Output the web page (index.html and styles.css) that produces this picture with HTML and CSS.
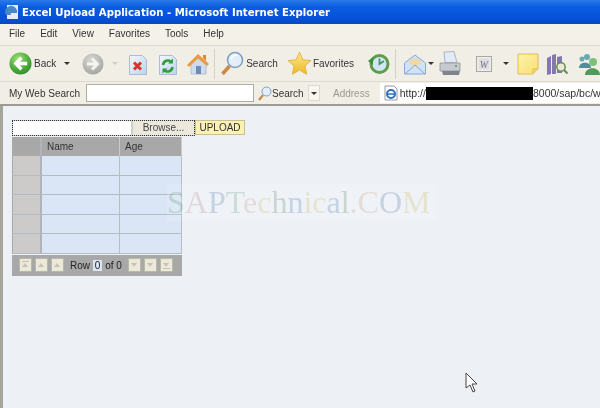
FILE: index.html
```html
<!DOCTYPE html>
<html lang="en">
<head>
    <meta charset="UTF-8">
    <title>Excel Upload Application</title>
    <link rel="stylesheet" href="styles.css">
</head>
<body>
    <svg class="defs" width="0" height="0">
        <defs>
            <radialGradient id="greenBall" cx="40%" cy="30%" r="75%"><stop offset="0" stop-color="#a6e07e"/><stop offset="0.6" stop-color="#4fae3c"/><stop offset="1" stop-color="#2f8a2c"/></radialGradient>
            <radialGradient id="grayBall" cx="40%" cy="30%" r="75%"><stop offset="0" stop-color="#d6d6d2"/><stop offset="1" stop-color="#a4a4a0"/></radialGradient>
            <linearGradient id="pageFill" x1="0" y1="0" x2="1" y2="1"><stop offset="0" stop-color="#f4f8fd"/><stop offset="1" stop-color="#bcd2ec"/></linearGradient>
            <linearGradient id="noteFill" x1="0" y1="0" x2="1" y2="1"><stop offset="0" stop-color="#fdf3ac"/><stop offset="1" stop-color="#f8df72"/></linearGradient>
            <linearGradient id="starFill" x1="0" y1="0" x2="0" y2="1"><stop offset="0" stop-color="#fbe98a"/><stop offset="1" stop-color="#eeb82c"/></linearGradient>
        </defs>
    </svg>

    <div class="window">
        <div class="titlebar">
            <svg class="title-icon" width="16" height="16" viewBox="0 0 16 16"><rect x="3" y="1" width="11" height="14" fill="#e4ecf5"/><path d="M2 11 A6 6 0 1 1 13 9 H7 A2 2 0 0 0 7 11 Z" fill="#4a86c8"/></svg>
            <span>Excel Upload Application - Microsoft Internet Explorer</span>
        </div>

        <div class="menubar">
            <span>File</span>
            <span>Edit</span>
            <span>View</span>
            <span>Favorites</span>
            <span>Tools</span>
            <span>Help</span>
        </div>

        <div class="toolbar">
            <svg width="23" height="23" viewBox="0 0 24 24"><circle cx="12" cy="12" r="11.500" fill="url(#greenBall)"/><path d="M19 12H8M13 6l-6 6 6 6" fill="none" stroke="#fff" stroke-width="3.400"/></svg>
            <span class="tool-label">Back</span>
            <span class="arrow arrow-back"></span>
            <svg class="icon-forward" width="22" height="22" viewBox="0 0 22 22"><circle cx="11" cy="11" r="10.500" fill="url(#grayBall)"/><path d="M5 11h10M10 5.500l5.500 5.500-5.500 5.500" fill="none" stroke="#f4f4f0" stroke-width="3"/></svg>
            <span class="arrow arrow-faded"></span>
            <svg class="icon-stop" width="20" height="24" viewBox="0 0 20 24"><path d="M1.500 3.500h13l4 4v15h-17z" fill="url(#pageFill)" stroke="#a9bdd6"/><path d="M6 10.500l7 7M13 10.500l-7 7" stroke="#d6352c" stroke-width="3"/></svg>
            <svg class="icon-refresh" width="20" height="24" viewBox="0 0 20 24"><path d="M1.500 3.500h13l4 4v15h-17z" fill="url(#pageFill)" stroke="#a9bdd6"/><path d="M5 13a5 5 0 0 1 8.500-3M14.500 15a5 5 0 0 1-8.500 3" fill="none" stroke="#2f9e3c" stroke-width="2.600"/><path d="M15 6.500v5h-5zM4.500 21.500v-5h5z" fill="#2f9e3c"/></svg>
            <svg class="icon-home" width="24" height="24" viewBox="0 0 24 24"><path d="M5 11v11h15V11l-7-6z" fill="#cfdcee" stroke="#a3b8d4" stroke-width="0.800"/><path d="M1 13L12 2l11 10-2 2-9-7.500L3 15z" fill="#ea9a40"/><path d="M17 3h3v6l-3-3z" fill="#d98a3c"/><rect x="10" y="14" width="5" height="8" fill="#6d8db8"/></svg>
            <span class="sep"></span>
            <svg class="icon-search" width="24" height="26" viewBox="0 0 24 26"><circle cx="15" cy="9" r="7.500" fill="#e2effa" stroke="#7f9fc4" stroke-width="1.600"/><path d="M11 8c1-3 3-4 6-4" fill="none" stroke="#fff" stroke-width="1.500"/><path d="M9.500 15L2.500 23" stroke="#c98a4a" stroke-width="3.600"/></svg>
            <span class="tool-label">Search</span>
            <svg class="icon-star" width="25" height="25" viewBox="0 0 24 24"><path d="M12 1l3.300 7.400 7.700.8-5.800 5.200 1.700 8L12 18.300 5.100 22.400l1.700-8L1 9.200l7.700-.8z" fill="url(#starFill)" stroke="#dcae34" stroke-width="0.800"/></svg>
            <span class="tool-label label-favorites">Favorites</span>
            <svg class="icon-history" width="24" height="24" viewBox="0 0 24 24"><circle cx="12.500" cy="12" r="8.500" fill="#d3e6f4" stroke="#5c9c4c" stroke-width="3"/><path d="M1 9l5-4v8z" fill="#3f8f3a"/><path d="M12.500 6.500V12l4.500-3" fill="none" stroke="#4f8f6a" stroke-width="1.800"/></svg>
            <span class="sep"></span>
            <svg class="icon-mail" width="24" height="24" viewBox="0 0 24 24"><path d="M1.500 11L12 3l10.500 8v11h-21z" fill="#cfe2f6" stroke="#87a8d0"/><path d="M6 11c1-6 11-6 12 0l-6 4z" fill="#f0d8a0"/><path d="M2 22l10-9 10 9" fill="none" stroke="#87a8d0"/></svg>
            <span class="arrow arrow-mail"></span>
            <svg class="icon-print" width="24" height="26" viewBox="0 0 24 26"><path d="M6 1l10-.5 3 11H7z" fill="#e2eaf5" stroke="#94a8c2" stroke-width="0.800"/><path d="M2 12h20v8H2z" fill="#c6cad0" stroke="#8f949c" stroke-width="0.800"/><path d="M4 20h18l-1 4H5z" fill="#7f848c"/><circle cx="18" cy="15" r="1" fill="#5c8f4a"/></svg>
            <svg class="icon-word" width="16" height="16" viewBox="0 0 16 16"><rect x="0.500" y="0.500" width="15" height="15" fill="#f1efe9" stroke="#a9a9a4"/><rect x="2.500" y="2.500" width="11" height="11" fill="#dcdee4"/><text x="8" y="12" text-anchor="middle" class="word-letter">W</text></svg>
            <span class="arrow arrow-word"></span>
            <svg class="icon-note" width="22" height="22" viewBox="0 0 22 22"><path d="M1 1h20v15l-5 5H1z" fill="url(#noteFill)" stroke="#e2bc54"/><path d="M16 21v-5h5" fill="#f4d776" stroke="#e2bc54"/></svg>
            <svg class="icon-book" width="22" height="24" viewBox="0 0 22 24"><path d="M1 6l4-2v18l-4 1zM6 3l4-1v20H6zM11 5l5-1v17h-5z" fill="#8478ae"/><circle cx="15" cy="15" r="4.200" fill="#ece8d4" stroke="#5f8f58" stroke-width="1.500"/><path d="M18 18l3.500 3.500" stroke="#5f8f58" stroke-width="2"/></svg>
            <svg class="icon-people" width="23" height="22" viewBox="0 0 23 22"><circle cx="5" cy="6" r="2.500" fill="#6aa8b4"/><circle cx="10" cy="4" r="3" fill="#6aa8b4"/><path d="M2 15c0-7 12-7 12 0z" fill="#4d8f9c"/><circle cx="16" cy="9" r="4" fill="#7cc07a"/><path d="M8 22c0-9 15-9 15 0z" fill="#4d9c5c"/></svg>
        </div>

        <div class="addressbar">
            <span class="search-label">My Web Search</span>
            <span class="search-field"></span>
            <span class="search-btn">
                <svg width="15" height="15" viewBox="0 0 15 15"><circle cx="9.500" cy="5.500" r="4.500" fill="#e2effa" stroke="#7f9fc4"/><path d="M6 9l-4 5" stroke="#c98a4a" stroke-width="2.200"/></svg>
                Search
            </span>
            <span class="search-drop"><span class="arrow"></span></span>
            <span class="address-label">Address</span>
            <div class="address-field">
                <svg width="16" height="16" viewBox="0 0 16 16"><path d="M2 1h9l3 3v11H2z" fill="#fff" stroke="#9a9a9a"/><circle cx="8" cy="9" r="4" fill="none" stroke="#2f6fc0" stroke-width="2"/><path d="M4 9h8" stroke="#2f6fc0" stroke-width="1.500"/></svg>
                <span class="url-start">http://</span>
                <span class="redacted"></span>
                <span>8000/sap/bc/w</span>
            </div>
        </div>

        <div class="content">
            <div class="upload-row">
                <div class="file-group">
                    <span class="file-input"></span>
                    <span class="browse-btn">Browse...</span>
                </div>
                <span class="upload-btn">UPLOAD</span>
            </div>

            <table class="grid">
                <tr class="grid-head">
                    <th class="sel"></th>
                    <th class="col-name">Name</th>
                    <th class="col-age">Age</th>
                </tr>
                <tr><td class="sel"></td><td></td><td></td></tr>
                <tr><td class="sel"></td><td></td><td></td></tr>
                <tr><td class="sel"></td><td></td><td></td></tr>
                <tr><td class="sel"></td><td></td><td></td></tr>
                <tr><td class="sel"></td><td></td><td></td></tr>
                <tr>
                    <td class="pager" colspan="3">
                        <div class="pager-inner">
                            <span class="page-btn first"></span>
                            <span class="page-btn page-up"></span>
                            <span class="page-btn row-up"></span>
                            <span class="page-text">Row <b>0</b> of 0</span>
                            <span class="page-btn row-down"></span>
                            <span class="page-btn page-down"></span>
                            <span class="page-btn last"></span>
                        </div>
                    </td>
                </tr>
            </table>
        </div>
    </div>

    <div class="watermark"><i class="c1">S</i><i class="c2">A</i><i class="c3">P</i><i class="c4">T</i><i class="c5">e</i><i class="c7">c</i><i class="c6">h</i><i class="c3">n</i><i class="c7">i</i><i class="c7">c</i><i class="c3">a</i><i class="c6">l</i><i class="c5">.</i><i class="c5">C</i><i class="c3">O</i><i class="c7">M</i></div>

    <svg class="cursor" width="14" height="22" viewBox="0 0 14 22"><path d="M1 1v15l4-3 3 7 2-1-3-7h5z" fill="#fff" stroke="#444"/></svg>
</body>
</html>
```

FILE: styles.css
```css
* {
    margin: 0;
    padding: 0;
    box-sizing: border-box;
}

html, body {
    width: 600px;
    height: 408px;
    overflow: hidden;
}

body {
    font-family: "Liberation Sans", Arial, sans-serif;
    font-size: 10px;
    color: #333;
    position: relative;
}

.defs {
    position: absolute;
}

.window {
    display: flex;
    flex-direction: column;
    height: 408px;
    background: #f1efe5;
    filter: blur(0.3px);
}

.window svg {
    flex-shrink: 0;
}

.titlebar {
    height: 24px;
    flex-shrink: 0;
    display: flex;
    align-items: center;
    gap: 2px;
    padding-left: 4px;
    background: linear-gradient(180deg, #2a7be8 0%, #0a5ce0 30%, #0550d8 80%, #0a48b8 100%);
    color: #fff;
    font-family: "DejaVu Sans", sans-serif;
    font-size: 10.150px;
    font-weight: bold;
}

.menubar {
    height: 22px;
    flex-shrink: 0;
    display: flex;
    align-items: center;
    padding: 0 0 2px 9px;
    gap: 15px;
    background: #f3f1e8;
    border-bottom: 1px solid #dcdacd;
}

.toolbar {
    height: 36px;
    flex-shrink: 0;
    display: flex;
    align-items: center;
    padding-left: 9px;
    background: #f1efe5;
    border-bottom: 1px solid #dcdacd;
}

.tool-label {
    margin-left: 2px;
    white-space: nowrap;
}

.label-favorites { margin-left: 1px; }

.arrow {
    display: inline-block;
    width: 0;
    height: 0;
    border-left: 3px solid transparent;
    border-right: 3px solid transparent;
    border-top: 3px solid #333;
}

.arrow-back { margin-left: 8px; }
.arrow-faded { margin-left: 8px; border-top-color: #d0d0c8; }
.arrow-mail { margin-left: 1px; }
.arrow-word { margin-left: 11px; }

.icon-forward { margin-left: 12px; }
.icon-stop { margin-left: 10px; }
.icon-refresh { margin-left: 10px; }
.icon-home { margin-left: 8px; }
.icon-search { margin-left: 5px; }
.icon-star { margin-left: 9px; }
.icon-history { margin-left: 13px; }
.icon-mail { margin-left: 7px; }
.icon-print { margin-left: 4px; }
.icon-word { margin-left: 14px; }
.icon-note { margin-left: 8px; }
.icon-book { margin-left: 7px; }
.icon-people { margin-left: 9px; }

.word-letter {
    font-family: "Liberation Serif", serif;
    font-size: 10px;
    font-style: italic;
    fill: #777;
}

.sep {
    width: 1px;
    height: 30px;
    margin-left: 4px;
    background: #d4d2c4;
}

.addressbar {
    height: 24px;
    flex-shrink: 0;
    display: flex;
    align-items: center;
    padding-left: 9px;
    background: #f1efe5;
    border-bottom: 2px solid #9c9b92;
}

.search-label {
    width: 77px;
    flex-shrink: 0;
    white-space: nowrap;
}

.search-field {
    width: 168px;
    height: 18px;
    background: #fff;
    border: 1px solid #b0aea2;
}

.search-btn {
    display: flex;
    align-items: center;
    width: 48px;
    margin-left: 3px;
    white-space: nowrap;
}

.search-drop {
    width: 12px;
    height: 16px;
    margin-left: 3px;
    display: flex;
    align-items: center;
    justify-content: center;
    background: #f7f6ef;
    border: 1px solid #dcdacd;
}

.address-label {
    margin-left: 13px;
    color: #9a9a92;
}

.address-field {
    margin-left: 10px;
    flex: 1;
    height: 20px;
    display: flex;
    align-items: center;
    padding-left: 3px;
    background: #fff;
    overflow: hidden;
    white-space: nowrap;
    font-size: 10.500px;
}

.url-start {
    margin-left: 1px;
}

.redacted {
    width: 107px;
    height: 13px;
    flex-shrink: 0;
    background: #000;
}

.content {
    flex: 1;
    padding: 14px 0 0 9px;
    background: #edf1f5;
    border-left: 3px solid #a6a59c;
}

.upload-row {
    display: flex;
    align-items: flex-start;
    height: 17px;
}

.file-group {
    display: flex;
    width: 183px;
    height: 16px;
    border: 1px dotted #333;
    background: #cfd0cc;
}

.file-input {
    width: 118px;
    background: #fff;
}

.browse-btn {
    flex: 1;
    margin-left: 2px;
    background: #ece9dc;
    text-align: center;
    line-height: 14px;
    color: #444;
}

.upload-btn {
    width: 50px;
    height: 15px;
    background: #faf2b4;
    border: 1px solid #c8c090;
    text-align: center;
    line-height: 13px;
    color: #333;
}

.grid {
    width: 170px;
    border-collapse: separate;
    border-spacing: 0;
    background: #b4bac4;
}

.grid th {
    height: 19px;
    padding-left: 5px;
    background: #a8a8a8;
    font-weight: normal;
    text-align: left;
    border-right: 1px solid #c8ccd0;
}

.grid td {
    height: 19.600px;
    background: #dae5f5;
    border-right: 1px solid #b8bec8;
    border-bottom: 1px solid #b4bac4;
}

.grid .sel {
    width: 30px;
    background: #cccbc9;
    border-left: 1px solid #a8a8a8;
    border-right: 2px solid #b0b4ba;
}

.grid th.sel {
    background: #a8a8a8;
}

.col-name {
    width: 78px;
}

.grid .pager {
    height: 22px;
    background: #a8a8a8;
    border: none;
    border-top: 1px solid #edf1f5;
}

.pager-inner {
    display: flex;
    align-items: center;
    padding-left: 7px;
    gap: 3px;
}

.page-btn {
    width: 13px;
    height: 14px;
    background: #ece9d8;
    border: 1px solid #b8b8ac;
    position: relative;
}

/* small arrow inside pager buttons */
.page-btn::after {
    content: '';
    position: absolute;
    left: 2px;
    top: 4px;
    width: 0;
    height: 0;
    border-left: 3.500px solid transparent;
    border-right: 3.500px solid transparent;
}

.first::after, .page-up::after, .row-up::after {
    border-bottom: 4px solid #c4c3b8;
}

.last::after, .page-down::after, .row-down::after {
    border-top: 4px solid #c4c3b8;
}

.first::before, .last::before {
    content: '';
    position: absolute;
    left: 2px;
    top: 2px;
    width: 7px;
    height: 1px;
    background: #c4c3b8;
}

.last::before {
    top: 9px;
}

.page-text {
    margin: 0 3px;
    color: #222;
    font-size: 10px;
    white-space: nowrap;
}

.page-text b {
    display: inline-block;
    padding: 0 2px;
    background: #dae5f5;
    font-weight: normal;
}

/* overlay on top of the page */
.watermark {
    position: absolute;
    left: 167px;
    top: 184px;
    padding-right: 5px;
    font-family: "Liberation Serif", serif;
    font-size: 32px;
    white-space: nowrap;
    background: rgba(255, 255, 255, 0.12);
    filter: blur(0.3px);
}

.watermark i {
    font-style: normal;
}

.c1 { color: rgba(110, 170, 130, 0.32); }
.c2 { color: rgba(200, 150, 150, 0.3); }
.c3 { color: rgba(110, 140, 190, 0.32); }
.c4 { color: rgba(130, 170, 150, 0.3); }
.c5 { color: rgba(210, 170, 150, 0.32); }
.c6 { color: rgba(120, 150, 130, 0.32); }
.c7 { color: rgba(210, 200, 140, 0.36); }

.cursor {
    position: absolute;
    left: 465px;
    top: 372px;
}
```
